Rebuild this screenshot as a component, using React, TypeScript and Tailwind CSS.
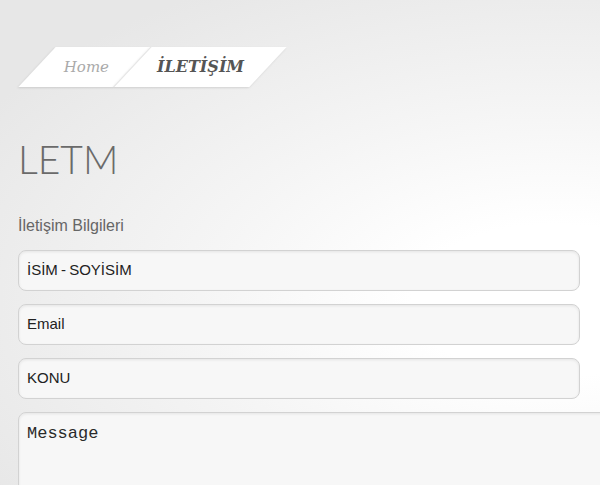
export default function App() {
  return (
    <div className="h-[485px] w-full overflow-hidden bg-[radial-gradient(ellipse_at_92%_62%,#ffffff_0%,#ffffff_18%,#f5f5f5_45%,#e7e7e7_85%)] pl-[18px] font-['Liberation_Sans',Arial,sans-serif]">
      {/* Breadcrumb */}
      <div className="ml-[19px] mt-[47px] flex h-[40px]">
        <div className="flex w-[95px] skew-x-[-43deg] items-center justify-center bg-white shadow-[0_1px_2px_rgba(0,0,0,0.12)]">
          <span className="ml-[4px] skew-x-[43deg] font-['DejaVu_Serif',serif] text-[15px] italic text-[#aaaaaa]">
            Home
          </span>
        </div>
        <div className="flex w-[136px] skew-x-[-43deg] items-center justify-center border-l border-[#e2e2e2] bg-white shadow-[0_1px_2px_rgba(0,0,0,0.12)]">
          <span className="skew-x-[43deg] font-['DejaVu_Serif',serif] text-[16px] font-bold italic text-[#555555]">
            İLETİŞİM
          </span>
        </div>
      </div>

      {/* Heading */}
      <h1 className="mt-[53px] font-['Lato',sans-serif] text-[39px] font-light leading-none text-[#6a6a6a]">
        LETM
      </h1>

      <p className="mt-[37px] text-[16px] leading-5 text-[#666666]">İletişim Bilgileri</p>

      {/* Form */}
      <form className="mt-[14px] flex flex-col gap-[13px]" onSubmit={(e) => e.preventDefault()}>
        <div className="flex h-[41px] w-[562px] items-center rounded-lg border border-[#d2d2d2] bg-[#f7f7f7] px-2 text-[15px] text-[#222222] shadow-[inset_0_1px_3px_rgba(0,0,0,0.08)] [word-spacing:-1px]">
          İSİM - SOYİSİM
        </div>
        <div className="flex h-[41px] w-[562px] items-center rounded-lg border border-[#d2d2d2] bg-[#f7f7f7] px-2 text-[15px] text-[#222222] shadow-[inset_0_1px_3px_rgba(0,0,0,0.08)]">
          Email
        </div>
        <div className="flex h-[41px] w-[562px] items-center rounded-lg border border-[#d2d2d2] bg-[#f7f7f7] px-2 text-[15px] text-[#222222] shadow-[inset_0_1px_3px_rgba(0,0,0,0.08)]">
          KONU
        </div>
        <div className="h-[120px] w-[620px] rounded-lg border border-[#d2d2d2] bg-[#f7f7f7] px-2 pt-[11px] font-['Liberation_Mono','Courier_New',monospace] text-[17px] leading-5 text-[#2a2a2a] shadow-[inset_0_1px_3px_rgba(0,0,0,0.08)]">
          Message
        </div>
      </form>
    </div>
  );
}
